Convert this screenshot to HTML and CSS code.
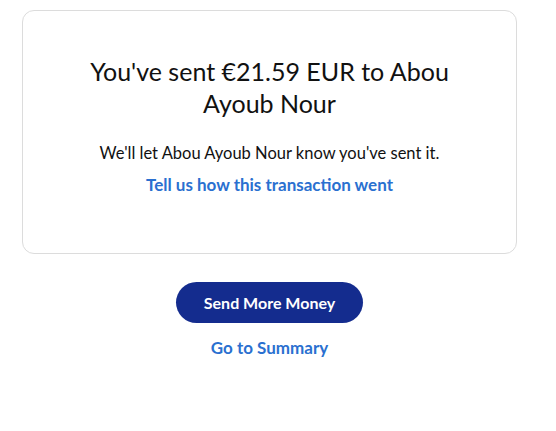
FILE: index.html
```html
<!DOCTYPE html>
<html>
<head>
<meta charset="utf-8">
<link rel="stylesheet" href="styles.css">
</head>
<body>
<div class="page">
  <div class="card">
    <h1 class="title">You've sent €21.59 EUR to Abou Ayoub Nour</h1>
    <p class="note">We'll let Abou Ayoub Nour know you've sent it.</p>
    <a class="link link-card" href="#">Tell us how this transaction went</a>
  </div>
  <div class="actions">
    <button class="btn">Send More Money</button>
    <a class="link link-summary" href="#">Go to Summary</a>
  </div>
</div>
</body>
</html>
```
FILE: styles.css
```css
html, body {
  margin: 0;
  padding: 0;
  background: #fff;
}
body {
  font-family: Lato, "Noto Sans", sans-serif;
  color: #000;
}
.page {
  width: 495px;
  margin-left: 22px;
  padding-top: 10px;
}
.card {
  box-sizing: border-box;
  height: 244px;
  border: 1px solid #dcdcdc;
  border-radius: 12px;
  display: flex;
  flex-direction: column;
  align-items: center;
  padding: 44px 50px 0;
  text-align: center;
}
.title {
  margin: 0;
  font-size: 25px;
  font-weight: 400;
  line-height: 32px;
  color: #111;
}
.note {
  margin: 24px 0 0;
  font-size: 16.5px;
  line-height: 20px;
  color: #111;
}
.link {
  color: #2a70d0;
  font-weight: 700;
  line-height: 20px;
  text-decoration: none;
}
.link-card {
  margin-top: 12px;
  font-size: 17px;
}
.link-summary {
  font-size: 17px;
}
.actions {
  display: flex;
  flex-direction: column;
  align-items: center;
  padding-top: 28px;
  gap: 15px;
}
.btn {
  width: 187px;
  height: 41px;
  border: none;
  border-radius: 21px;
  background: #142c8e;
  color: #fff;
  font-family: inherit;
  font-weight: 700;
  font-size: 16px;
}
```
